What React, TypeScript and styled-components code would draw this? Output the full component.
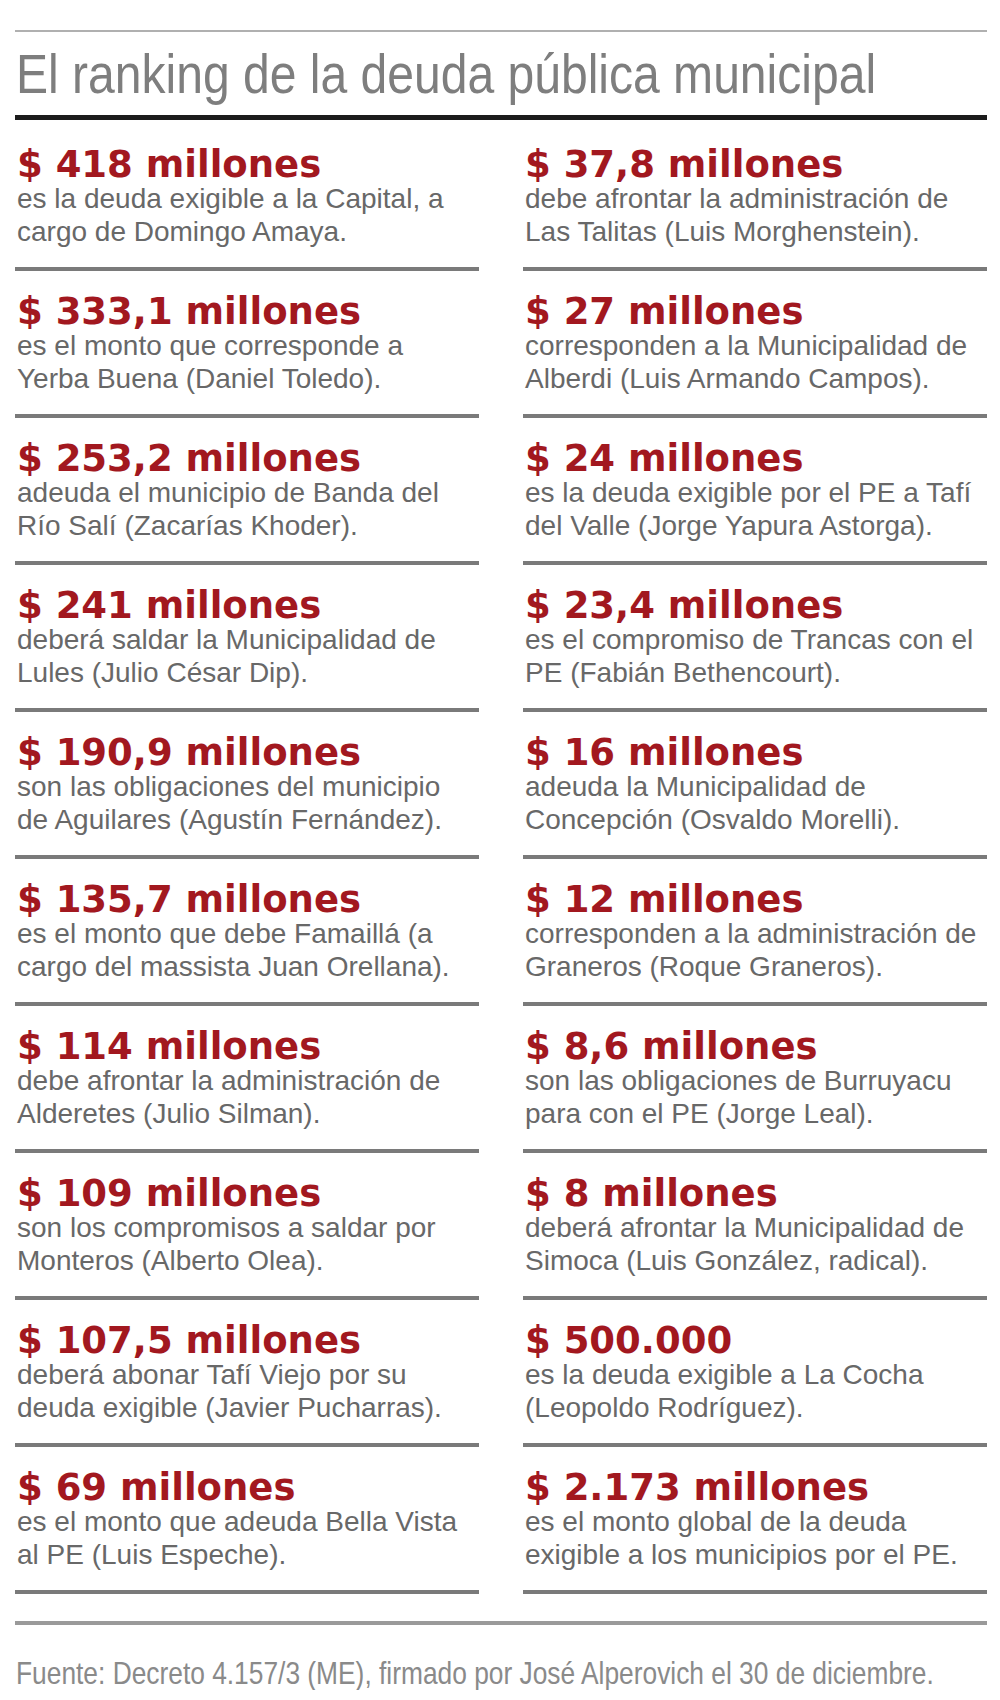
import React from "react";
import styled, { createGlobalStyle } from "styled-components";

const GlobalStyle = createGlobalStyle`
  html, body {
    margin: 0;
    padding: 0;
    background: #ffffff;
  }
  body {
    font-family: "Liberation Sans", Arial, sans-serif;
  }
`;

type Entry = { amount: string; lines: [string, string] };

const left: Entry[] = [
  { amount: "$ 418 millones", lines: ["es la deuda exigible a la Capital, a", "cargo de Domingo Amaya."] },
  { amount: "$ 333,1 millones", lines: ["es el monto que corresponde a", "Yerba Buena (Daniel Toledo)."] },
  { amount: "$ 253,2 millones", lines: ["adeuda el municipio de Banda del", "Río Salí (Zacarías Khoder)."] },
  { amount: "$ 241 millones", lines: ["deberá saldar la Municipalidad de", "Lules (Julio César Dip)."] },
  { amount: "$ 190,9 millones", lines: ["son las obligaciones del municipio", "de Aguilares (Agustín Fernández)."] },
  { amount: "$ 135,7 millones", lines: ["es el monto que debe Famaillá (a", "cargo del massista Juan Orellana)."] },
  { amount: "$ 114 millones", lines: ["debe afrontar la administración de", "Alderetes (Julio Silman)."] },
  { amount: "$ 109 millones", lines: ["son los compromisos a saldar por", "Monteros (Alberto Olea)."] },
  { amount: "$ 107,5 millones", lines: ["deberá abonar Tafí Viejo por su", "deuda exigible (Javier Pucharras)."] },
  { amount: "$ 69 millones", lines: ["es el monto que adeuda Bella Vista", "al PE (Luis Espeche)."] },
];

const right: Entry[] = [
  { amount: "$ 37,8 millones", lines: ["debe afrontar la administración de", "Las Talitas (Luis Morghenstein)."] },
  { amount: "$ 27 millones", lines: ["corresponden a la Municipalidad de", "Alberdi (Luis Armando Campos)."] },
  { amount: "$ 24 millones", lines: ["es la deuda exigible por el PE a Tafí", "del Valle (Jorge Yapura Astorga)."] },
  { amount: "$ 23,4 millones", lines: ["es el compromiso de Trancas con el", "PE (Fabián Bethencourt)."] },
  { amount: "$ 16 millones", lines: ["adeuda la Municipalidad de", "Concepción (Osvaldo Morelli)."] },
  { amount: "$ 12 millones", lines: ["corresponden a la administración de", "Graneros (Roque Graneros)."] },
  { amount: "$ 8,6 millones", lines: ["son las obligaciones de Burruyacu", "para con el PE (Jorge Leal)."] },
  { amount: "$ 8 millones", lines: ["deberá afrontar la Municipalidad de", "Simoca (Luis González, radical)."] },
  { amount: "$ 500.000", lines: ["es la deuda exigible a La Cocha", "(Leopoldo Rodríguez)."] },
  { amount: "$ 2.173 millones", lines: ["es el monto global de la deuda", "exigible a los municipios por el PE."] },
];

const Page = styled.div`
  width: 1000px;
  box-sizing: border-box;
  padding: 30px 13px 0 15px;
  overflow: hidden;
`;

const TopRule = styled.div`
  height: 2px;
  background: #b0b0b0;
`;

const TitleRow = styled.div`
  margin: 10px 0 9px 1px;
  height: 64px;
  overflow: hidden;
`;

const Title = styled.h1`
  display: inline-block;
  margin: 0;
  font-family: "Liberation Sans", Arial, sans-serif;
  font-weight: 400;
  font-size: 56px;
  line-height: 64px;
  color: #7e7e7e;
  white-space: nowrap;
  transform: scaleX(0.858);
  transform-origin: left center;
`;

const HeavyRule = styled.div`
  height: 5px;
  background: #1c1c1c;
`;

const Columns = styled.div`
  display: grid;
  grid-template-columns: 1fr 1fr;
  column-gap: 44px;
  padding-top: 4px;
`;

const Column = styled.div`
  display: flex;
  flex-direction: column;
`;

const Item = styled.div`
  padding: 23px 0 19px 2px;
  border-bottom: 4px solid #7a7a7a;
`;

const Amount = styled.div`
  font-family: "DejaVu Sans", "Liberation Sans", sans-serif;
  font-weight: 700;
  font-size: 37px;
  line-height: 35px;
  color: #a2181f;
  white-space: nowrap;
`;

const Line = styled.div`
  font-family: "Liberation Sans", Arial, sans-serif;
  font-size: 28px;
  line-height: 33px;
  color: #686868;
  white-space: nowrap;
`;

const BottomRule = styled.div`
  margin-top: 27px;
  height: 4px;
  background: #9a9a9a;
`;

const SourceRow = styled.div`
  margin: 31px 0 0 1px;
  height: 34px;
  overflow: hidden;
`;

const Source = styled.p`
  display: inline-block;
  margin: 0;
  font-family: "Liberation Sans", Arial, sans-serif;
  font-size: 32px;
  line-height: 34px;
  color: #8a8a8a;
  white-space: nowrap;
  transform: scaleX(0.823);
  transform-origin: left center;
`;

const Entries: React.FC<{ items: Entry[] }> = ({ items }) => (
  <Column>
    {items.map((it) => (
      <Item key={it.amount}>
        <Amount>{it.amount}</Amount>
        <Line>{it.lines[0]}</Line>
        <Line>{it.lines[1]}</Line>
      </Item>
    ))}
  </Column>
);

export default function App() {
  return (
    <>
      <GlobalStyle />
      <Page>
        <TopRule />
        <TitleRow>
          <Title>El ranking de la deuda pública municipal</Title>
        </TitleRow>
        <HeavyRule />
        <Columns>
          <Entries items={left} />
          <Entries items={right} />
        </Columns>
        <BottomRule />
        <SourceRow>
          <Source>
            Fuente: Decreto 4.157/3 (ME), firmado por José Alperovich el 30 de diciembre.
          </Source>
        </SourceRow>
      </Page>
    </>
  );
}
